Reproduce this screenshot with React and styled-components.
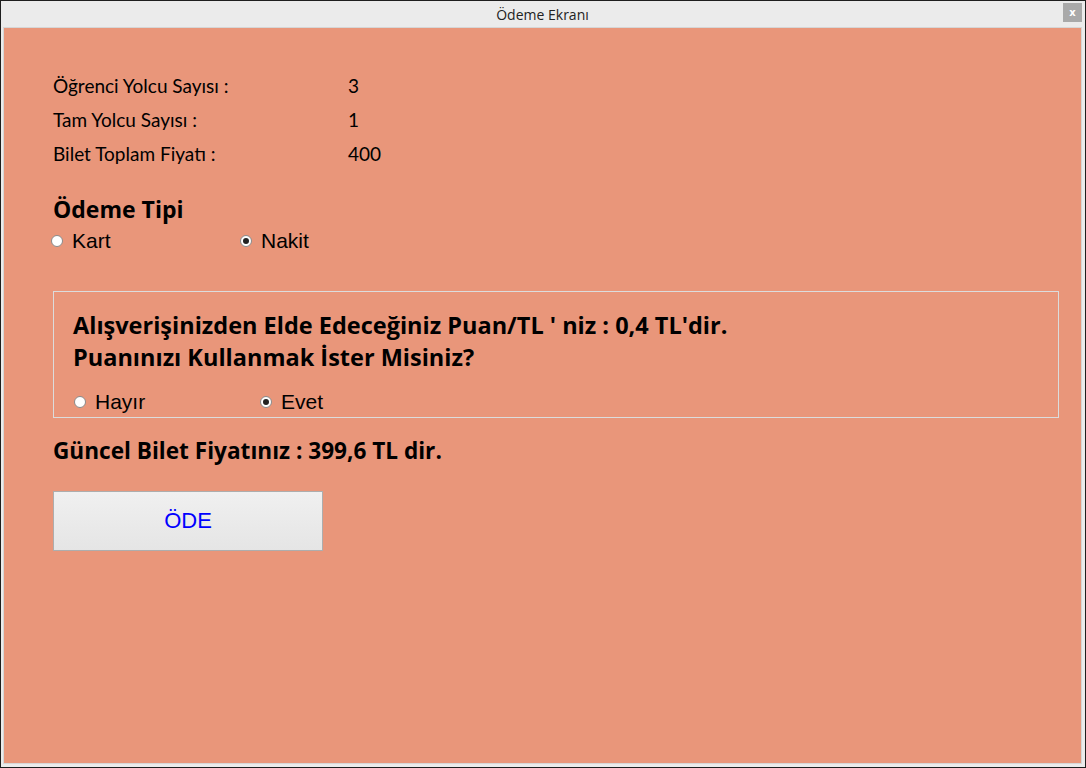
import React from 'react';
import styled, { createGlobalStyle } from "styled-components";

const GlobalStyle = createGlobalStyle`
    html, body {
        margin: 0;
        padding: 0;
        background: #ffffff;
    }
`;

const Window = styled.div`
    width: 1086px;
    height: 768px;
    box-sizing: border-box;
    border: 1px solid #1e1e1e;
    background: #ebebeb;
    display: flex;
    flex-direction: column;
    padding: 0 3px 3px 2px;
`;

const TitleBar = styled.div`
    height: 26px;
    display: flex;
    align-items: center;
    justify-content: center;
    position: relative;
    font-family: "Open Sans", "Noto Sans", sans-serif;
    font-size: 14px;
    color: #222;
`;

const CloseButton = styled.div`
    position: absolute;
    right: 0;
    top: 2px;
    width: 19px;
    height: 19px;
    background: #a9a9a9;
    color: #fff;
    font-family: "DejaVu Sans", sans-serif;
    font-size: 10px;
    font-weight: bold;
    display: flex;
    align-items: center;
    justify-content: center;
`;

const Content = styled.div`
    flex: 1;
    background: #e9967a;
    border: 1px solid #d6d6d6;
    padding: 41px 0 0 49px;
    display: flex;
    flex-direction: column;
    align-items: flex-start;
    font-family: Lato, "Open Sans", sans-serif;
    color: #000;
`;

const InfoRow = styled.div`
    display: grid;
    grid-template-columns: 295px auto;
    height: 34px;
    line-height: 34px;
    font-size: 19px;
`;

const Heading = styled.div`
    margin-top: 24px;
    font-family: "Open Sans", sans-serif;
    font-size: 23px;
    font-weight: bold;
    line-height: 28px;
`;

const RadioGroup = styled.div`
    display: flex;
    margin-top: ${p => p.$top || 0}px;
    margin-left: ${p => p.$left || 0}px;
`;

const RadioLabel = styled.label`
    display: flex;
    align-items: center;
    width: ${p => p.$width}px;
    height: 24px;
    font-family: "Liberation Sans", Arial, sans-serif;
    font-size: 21px;
    color: #000;
`;

const Circle = styled.span`
    width: 12px;
    height: 12px;
    box-sizing: border-box;
    border-radius: 50%;
    border: 1px solid #8a8a8a;
    background: #fff;
    margin-right: 9px;
    display: flex;
    align-items: center;
    justify-content: center;
    &::after {
        content: "";
        width: 6px;
        height: 6px;
        border-radius: 50%;
        background: ${p => (p.$checked ? "#222" : "transparent")};
    }
`;

const PointsBox = styled.div`
    margin-top: 38px;
    width: 1006px;
    box-sizing: border-box;
    border: 1px solid #dcdcdc;
    padding: 17px 0 3px 19px;
`;

const BoldLine = styled.div`
    font-family: "Open Sans", sans-serif;
    font-size: 23.5px;
    font-weight: bold;
    line-height: 32px;
`;

const CurrentPrice = styled.div`
    margin-top: 18px;
    font-family: "Open Sans", sans-serif;
    font-size: 22.6px;
    font-weight: bold;
    line-height: 30px;
`;

const PayButton = styled.button`
    margin-top: 25px;
    width: 270px;
    height: 60px;
    border: 1px solid #adadad;
    background: linear-gradient(#f0f0f0, #e5e5e5);
    color: #0000ff;
    font-family: "Liberation Sans", Arial, sans-serif;
    font-size: 22px;
    cursor: pointer;
`;

const Radio = ({ label, checked, width }) => (
    <RadioLabel $width={width}>
        <Circle $checked={checked} />
        {label}
    </RadioLabel>
);

const App = () => (
    <>
        <GlobalStyle />
        <Window>
            <TitleBar>
                Ödeme Ekranı
                <CloseButton>x</CloseButton>
            </TitleBar>
            <Content>
                <InfoRow><span>Öğrenci Yolcu Sayısı :</span><span>3</span></InfoRow>
                <InfoRow><span>Tam Yolcu Sayısı :</span><span>1</span></InfoRow>
                <InfoRow><span>Bilet Toplam Fiyatı :</span><span>400</span></InfoRow>

                <Heading>Ödeme Tipi</Heading>
                <RadioGroup $top={6} $left={-2}>
                    <Radio label="Kart" width={189} />
                    <Radio label="Nakit" checked width={120} />
                </RadioGroup>

                <PointsBox>
                    <BoldLine>Alışverişinizden Elde Edeceğiniz Puan/TL ' niz : 0,4 TL'dir.</BoldLine>
                    <BoldLine>Puanınızı Kullanmak İster Misiniz?</BoldLine>
                    <RadioGroup $top={17} $left={1}>
                        <Radio label="Hayır" width={186} />
                        <Radio label="Evet" checked width={120} />
                    </RadioGroup>
                </PointsBox>

                <CurrentPrice>Güncel Bilet Fiyatınız : 399,6 TL dir.</CurrentPrice>
                <PayButton>ÖDE</PayButton>
            </Content>
        </Window>
    </>
);

export default App;
